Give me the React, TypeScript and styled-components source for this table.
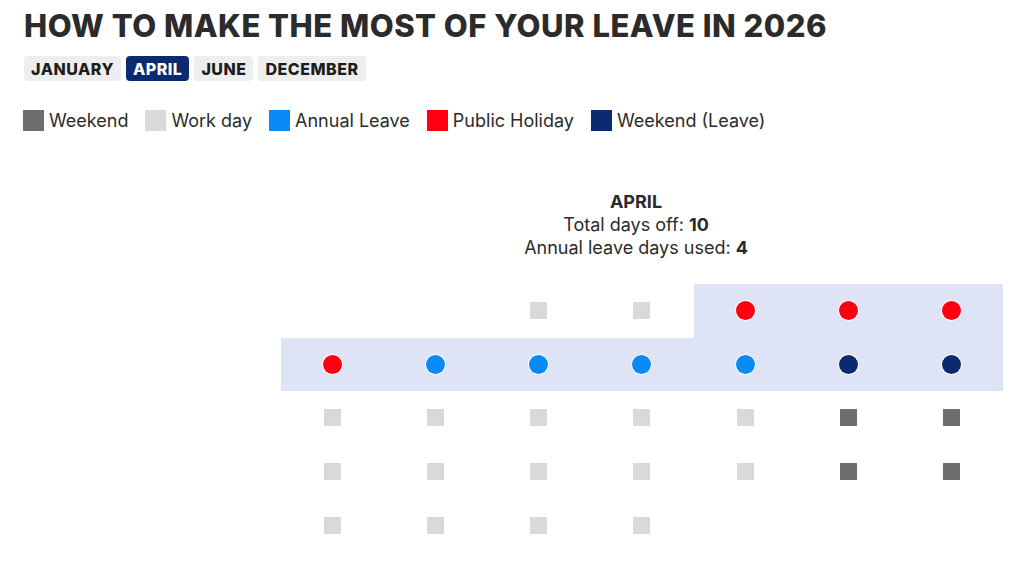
import React from "react";
import styled, { createGlobalStyle } from "styled-components";

const Global = createGlobalStyle`
  html, body { margin: 0; padding: 0; background: #fff; }
  body { font-family: Inter, "Open Sans", sans-serif; color: #222; }
`;

const Page = styled.div`
  width: 1024px;
  height: 563px;
  box-sizing: border-box;
  padding: 6px 0 0 24px;
  overflow: hidden;
`;

const Title = styled.h1`
  margin: 0;
  font-family: Inter, sans-serif;
  font-weight: 800;
  font-size: 31px;
  line-height: 40px;
  color: #2b2b2b;
  letter-spacing: 0.5px;
`;

const Tabs = styled.div`
  display: flex;
  gap: 5px;
  margin-top: 10px;
`;

const Tab = styled.button<{ $active?: boolean }>`
  border: none;
  height: 25px;
  padding: 0 7px;
  border-radius: 4px;
  font-family: Inter, sans-serif;
  font-weight: 800;
  font-size: 16px;
  letter-spacing: 0.5px;
  background: ${(p) => (p.$active ? "#0b2a6f" : "#eeeeee")};
  color: ${(p) => (p.$active ? "#fff" : "#1d1d1d")};
  cursor: pointer;
`;

const Legend = styled.div`
  display: flex;
  align-items: center;
  margin-top: 29px;
  margin-left: -1px;
`;

const LegendItem = styled.div`
  display: flex;
  align-items: center;
  gap: 5px;
  margin-right: 17px;
  font-size: 18px;
  color: #2b2b2b;
`;

const Swatch = styled.span<{ $color: string }>`
  width: 21px;
  height: 21px;
  background: ${(p) => p.$color};
  display: inline-block;
`;

const Stats = styled.div`
  width: 722px;
  box-sizing: border-box;
  padding-right: 12px;
  margin-left: 257px;
  margin-top: 59px;
  text-align: center;
  font-size: 18px;
  line-height: 23px;
  color: #2b2b2b;
`;

const Month = styled.div`
  font-weight: 700;
`;

const Grid = styled.div`
  display: grid;
  grid-template-columns: repeat(7, 103.14px);
  grid-auto-rows: 53.6px;
  margin-left: 257px;
  margin-top: 25px;
`;

const Cell = styled.div<{ $hl?: boolean }>`
  display: flex;
  align-items: center;
  justify-content: center;
  background: ${(p) => (p.$hl ? "#dfe3f6" : "transparent")};
`;

const Square = styled.span<{ $color: string }>`
  width: 17px;
  height: 17px;
  background: ${(p) => p.$color};
`;

const Dot = styled.span<{ $color: string }>`
  width: 19px;
  height: 19px;
  border-radius: 50%;
  background: ${(p) => p.$color};
  box-shadow: 0 0 0 1px #fff;
`;

const C = {
  weekend: "#6e6e6e",
  work: "#d9d9d9",
  leave: "#0a8af5",
  holiday: "#ff0010",
  wleave: "#0b2a6f",
};

type Kind = "weekend" | "work" | "leave" | "holiday" | "wleave" | null;

const rows: Kind[][] = [
  [null, null, "work", "work", "holiday", "holiday", "holiday"],
  ["holiday", "leave", "leave", "leave", "leave", "wleave", "wleave"],
  ["work", "work", "work", "work", "work", "weekend", "weekend"],
  ["work", "work", "work", "work", "work", "weekend", "weekend"],
  ["work", "work", "work", "work", null, null, null],
];

const highlighted = (r: number, c: number) => (r === 0 && c >= 4) || r === 1;

export default function App() {
  return (
    <Page>
      <Global />
      <Title>HOW TO MAKE THE MOST OF YOUR LEAVE IN 2026</Title>
      <Tabs>
        <Tab>JANUARY</Tab>
        <Tab $active>APRIL</Tab>
        <Tab>JUNE</Tab>
        <Tab>DECEMBER</Tab>
      </Tabs>
      <Legend>
        <LegendItem><Swatch $color={C.weekend} />Weekend</LegendItem>
        <LegendItem><Swatch $color={C.work} />Work day</LegendItem>
        <LegendItem><Swatch $color={C.leave} />Annual Leave</LegendItem>
        <LegendItem><Swatch $color={C.holiday} />Public Holiday</LegendItem>
        <LegendItem><Swatch $color={C.wleave} />Weekend (Leave)</LegendItem>
      </Legend>
      <Stats>
        <Month>APRIL</Month>
        <div>Total days off: <b>10</b></div>
        <div>Annual leave days used: <b>4</b></div>
      </Stats>
      <Grid>
        {rows.map((row, r) =>
          row.map((k, c) => (
            <Cell key={`${r}-${c}`} $hl={highlighted(r, c)}>
              {k === "work" || k === "weekend" ? (
                <Square $color={C[k]} />
              ) : k ? (
                <Dot $color={C[k]} />
              ) : null}
            </Cell>
          ))
        )}
      </Grid>
    </Page>
  );
}
